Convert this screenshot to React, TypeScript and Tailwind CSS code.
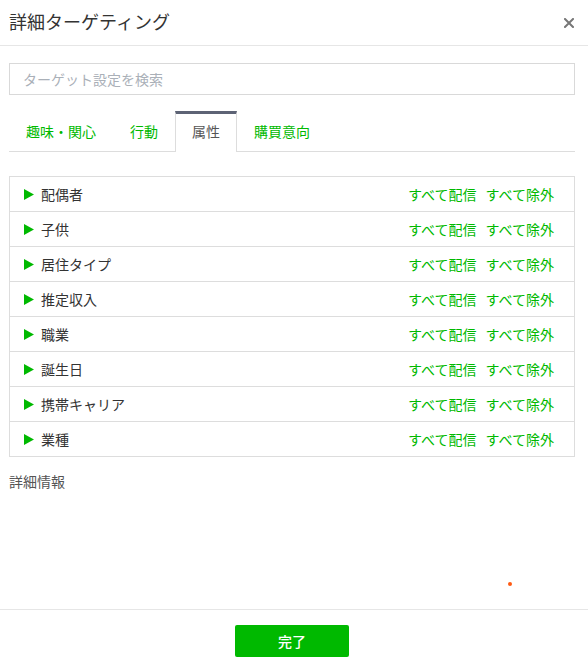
import React from "react";

const rows = ["配偶者", "子供", "居住タイプ", "推定収入", "職業", "誕生日", "携帯キャリア", "業種"];
const tabs = ["趣味・関心", "行動", "属性", "購買意向"];

export default function App() {
  return (
    <div
      className="relative flex h-[671px] w-[588px] flex-col bg-white text-[#333]"
      style={{ fontFamily: '"Noto Sans CJK JP", "Noto Sans", sans-serif' }}
    >
      <div className="flex h-[46px] shrink-0 items-center justify-between border-b border-[#e6e6e6] pl-[9px] pr-[14px] pb-[4px]">
        <div className="text-[18px] leading-none text-[#333]">詳細ターゲティング</div>
        <svg width="10" height="10" viewBox="0 0 10 10" className="mt-[4px]">
          <path d="M1 1 L9 9 M9 1 L1 9" stroke="#777" strokeWidth="2" strokeLinecap="square" />
        </svg>
      </div>

      <div className="flex-1 pl-[9px] pr-[13px]">
        <div className="mt-[17px] flex h-[32px] items-center border border-[#d9d9d9] px-[13px] text-[14px] text-[#aab0b8]">
          ターゲット設定を検索
        </div>

        <div className="mt-[16px] flex h-[41px] border-b border-[#dddddd]">
          {tabs.map((t) => {
            const active = t === "属性";
            return active ? (
              <div
                key={t}
                className="-mb-px flex items-center border-x border-t-[3px] border-x-[#dddddd] border-t-[#5d6375] bg-white px-[16px] pb-[3px] text-[14px] text-[#555]"
              >
                {t}
              </div>
            ) : (
              <div key={t} className="flex items-center px-[17px] text-[14px] text-[#00b900]">
                {t}
              </div>
            );
          })}
        </div>

        <div className="mt-[24px] border border-[#dddddd]">
          {rows.map((r, i) => (
            <div
              key={r}
              className={`flex items-center justify-between pl-[14px] pr-[20px] text-[14px] ${
                i > 0 ? "h-[35px] border-t border-[#dddddd]" : "h-[34px]"
              }`}
            >
              <div className="flex items-center">
                <svg width="10" height="11" viewBox="0 0 10 11" className="mr-[7px]">
                  <path d="M0 0 L10 5.5 L0 11 Z" fill="#00b900" />
                </svg>
                <span className="text-[#333]">{r}</span>
              </div>
              <div className="flex gap-[9px] text-[#00b900]">
                <span>すべて配信</span>
                <span>すべて除外</span>
              </div>
            </div>
          ))}
        </div>

        <div className="mt-[14px] text-[14px] text-[#555]">詳細情報</div>
      </div>

      <div className="flex h-[62px] shrink-0 justify-center border-t border-[#e6e6e6] pt-[15px] pr-[4px]">
        <button className="flex h-[32px] w-[114px] items-center justify-center rounded-[2px] bg-[#00b900] text-[14px] font-medium text-white">
          完了
        </button>
      </div>

      <div className="absolute left-[508px] top-[582px] h-[4px] w-[4px] rounded-full bg-[#ff5a12]" />
    </div>
  );
}
